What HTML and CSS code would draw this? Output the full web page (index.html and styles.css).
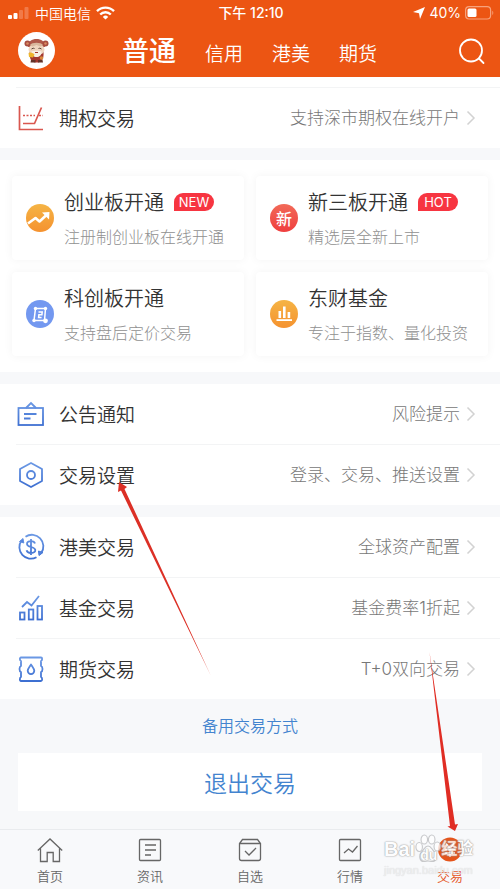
FILE: index.html
```html
<!DOCTYPE html>
<html lang="zh-CN">
<head>
<meta charset="utf-8">
<meta name="viewport" content="width=device-width, initial-scale=1">
<title>交易</title>
<link rel="stylesheet" href="styles.css">
</head>
<body>
<svg class="defs" width="0" height="0" aria-hidden="true">
  <defs>
    <linearGradient id="blue" gradientUnits="userSpaceOnUse" x1="0" y1="0" x2="0" y2="28"><stop offset="0" stop-color="#6f9ce6"/><stop offset="1" stop-color="#3a6cd0"/></linearGradient>
    <linearGradient id="orange" x1="0" y1="0" x2="0" y2="1"><stop offset="0" stop-color="#f5b445"/><stop offset="1" stop-color="#f5922f"/></linearGradient>
    <symbol id="chevron" viewBox="0 0 10 16"><path d="M1.500 1.500L8 8l-6.500 6.500" fill="none" stroke="#d2d2d2" stroke-width="1.500"/></symbol>
  </defs>
</svg>

<header class="header">
  <div class="status">
    <div class="status-side">
      <svg width="22" height="14" viewBox="0 0 22 14"><rect x="0" y="9" width="4" height="4" rx="1" fill="#fff"/><rect x="5.500" y="7" width="4" height="6" rx="1" fill="#fff"/><rect x="11" y="4" width="4" height="9" rx="1" fill="#f17a48"/><rect x="16.500" y="1" width="4" height="12" rx="1" fill="#f17a48"/></svg>
      <span class="carrier">中国电信</span>
      <svg width="19" height="14" viewBox="0 0 19 14" fill="none" stroke="#fff" stroke-width="2.400"><path d="M1 5.200a12 12 0 0 1 17 0"/><path d="M4.200 8.500a7.500 7.500 0 0 1 10.600 0"/><path d="M6.800 10.900a3.800 3.800 0 0 1 5.400 0L9.500 13.600z" fill="#fff" stroke="none"/></svg>
    </div>
    <span class="clock">下午 12:10</span>
    <div class="status-side status-right">
      <svg width="12" height="12" viewBox="0 0 12 12"><path d="M12 0L7 12 6 6.200 0 5z" fill="#fff"/></svg>
      <span class="charge">40%</span>
      <svg width="29" height="14" viewBox="0 0 29 14"><rect x=".6" y=".6" width="25" height="12.400" rx="3.500" fill="none" stroke="#f7a27c" stroke-width="1.200"/><rect x="2.500" y="2.500" width="9" height="8.600" rx="1.500" fill="#fff"/><path d="M27.300 4.800c1.300.6 1.300 3.600 0 4.200z" fill="#f7a27c"/></svg>
    </div>
  </div>
  <div class="topbar">
    <button class="avatar" aria-label="我的">
      <svg width="37" height="37" viewBox="0 0 37 37">
        <circle cx="18.500" cy="18.500" r="18.500" fill="#fff"/>
        <path d="M11.500 20c0 8 2 10.500 7 10.500s7.500-2.500 7-10.500z" fill="#a3382f"/>
        <path d="M13 28l-.5 2.500h5V28zM20 28v2.500h5L24.500 28z" fill="#623329"/>
        <path d="M10 15C10 9 14 7 18.500 7S27 9 27 15z" fill="#b0594a"/>
        <circle cx="9.500" cy="11.500" r="3" fill="#a84c3f"/><circle cx="27.500" cy="11.500" r="3" fill="#a84c3f"/>
        <circle cx="9.500" cy="11.500" r="1.300" fill="#d98b62"/><circle cx="27.500" cy="11.500" r="1.300" fill="#d98b62"/>
        <ellipse cx="18.500" cy="17.500" rx="8" ry="6" fill="#efd5bf"/>
        <path d="M12 13c2-3 11-3 13 0l-2.500 1.500-4-1.500-4 1.500z" fill="#d9b79c"/>
        <path d="M13.500 17l2-1 1 1M20.500 17l1-1 2 1" stroke="#5c4439" fill="none"/>
        <path d="M13.500 19.500c2-1 8-1 10 0 0 4-2 5.500-5 5.500s-5-1.500-5-5.500z" fill="#f7f1e7"/>
        <path d="M17 20.500h3" stroke="#a3382f"/>
        <path d="M10.500 21c2-1.500 5 0 6 1.500l-1.500 3-4-.5z" fill="#eeb52d"/><circle cx="23.500" cy="26" r="1.800" fill="#d9893c"/>
      </svg>
    </button>
    <nav class="tabs">
      <button class="tab tab-on">普通</button>
      <button class="tab">信用</button>
      <button class="tab">港美</button>
      <button class="tab">期货</button>
    </nav>
    <button class="search" aria-label="搜索">
      <svg width="26" height="27" viewBox="0 0 26 27" fill="none" stroke="#fff" stroke-width="1.800" stroke-linecap="round"><circle cx="12" cy="12.500" r="11"/><path d="M20 20.500l4.500 4.500"/></svg>
    </button>
  </div>
</header>

<main class="main">
  <section class="group group-top">
    <a class="row ruled" href="#">
      <svg class="row-icon" viewBox="0 0 28 28" fill="none" stroke="#d9574f" stroke-width="1.700"><path d="M2.500 2v23.500H26"/><path d="M6 19.500h11.500L24.500 3.500"/><path d="M6 11.500h12M22 11.500h4" stroke-dasharray="2 1.500"/></svg>
      <span class="row-title">期权交易</span><span class="row-note">支持深市期权在线开户</span>
      <svg class="chevron"><use href="#chevron"/></svg>
    </a>
  </section>

  <section class="cards">
    <a class="card" href="#">
      <svg class="card-icon" viewBox="0 0 28 28"><circle cx="14" cy="14" r="14" fill="url(#orange)"/><path d="M2 19.500L9.500 14l4 3.500 7-6.500" fill="none" stroke="#fff" stroke-width="2.600" stroke-linejoin="round"/><path d="M16 8.500l7.500-.5-.5 7.500z" fill="#fff"/></svg>
      <div class="card-text"><div class="card-head"><span class="card-title">创业板开通</span><span class="badge">NEW</span></div><div class="card-note">注册制创业板在线开通</div></div>
    </a>
    <a class="card" href="#">
      <span class="card-icon seal">新</span>
      <div class="card-text"><div class="card-head"><span class="card-title">新三板开通</span><span class="badge">HOT</span></div><div class="card-note">精选层全新上市</div></div>
    </a>
    <a class="card" href="#">
      <svg class="card-icon" viewBox="0 0 28 28"><circle cx="14" cy="14" r="14" fill="#7398f0"/><g fill="none" stroke="#fff" stroke-width="1.500"><path d="M9.500 8.500h10L18.500 20.500H8z"/><path d="M12.500 12h3.700l-.3 2.800h-3l-.3 2.800h3"/></g><g fill="#fff"><circle cx="9.500" cy="8.500" r="1.700"/><circle cx="19.500" cy="8.500" r="1.700"/><circle cx="8" cy="20.500" r="1.700"/><circle cx="19.500" cy="20.800" r="2.400"/></g></svg>
      <div class="card-text"><div class="card-head"><span class="card-title">科创板开通</span></div><div class="card-note">支持盘后定价交易</div></div>
    </a>
    <a class="card" href="#">
      <svg class="card-icon" viewBox="0 0 28 28"><circle cx="14" cy="14" r="14" fill="url(#orange)"/><g fill="#fff"><rect x="8.500" y="11" width="2.600" height="7"/><rect x="13" y="6.500" width="2.600" height="11.500"/><rect x="17.600" y="12" width="2.600" height="6"/><rect x="6.500" y="19.200" width="15.500" height="1.800"/></g></svg>
      <div class="card-text"><div class="card-head"><span class="card-title">东财基金</span></div><div class="card-note">专注于指数、量化投资</div></div>
    </a>
  </section>

  <section class="group">
    <a class="row" href="#">
      <svg class="row-icon" viewBox="0 0 28 28" fill="none" stroke="url(#blue)" stroke-width="1.800"><rect x="1.500" y="8" width="24.500" height="17"/><path d="M9 8l5-5 5 5"/><path d="M7 14h12.500M7 18.500h6.500"/></svg>
      <span class="row-title">公告通知</span><span class="row-note">风险提示</span>
      <svg class="chevron"><use href="#chevron"/></svg>
    </a>
    <a class="row ruled" href="#">
      <svg class="row-icon" viewBox="0 0 28 28" fill="none" stroke="url(#blue)" stroke-width="1.800" stroke-linejoin="round"><path d="M14 2l11 6v12l-11 6-11-6V8z"/><circle cx="14" cy="14" r="4"/></svg>
      <span class="row-title">交易设置</span><span class="row-note">登录、交易、推送设置</span>
      <svg class="chevron"><use href="#chevron"/></svg>
    </a>
  </section>

  <section class="group">
    <a class="row" href="#">
      <svg class="row-icon" viewBox="0 0 28 28" fill="none" stroke="url(#blue)" stroke-width="1.800"><path d="M4.500 7.500A11.500 11.500 0 0 0 19.500 24.200M8.500 3.700A11.500 11.500 0 0 1 24.200 20"/><path d="M2.500 8.500l3.500-3 .8 4.500zM26 19.500l-4 3-.5-4.500z" fill="#5583dd" stroke-width="1"/><path d="M18 10.500C17.500 8.800 16 8.200 14 8.200c-2.400 0-4 1-4 2.700 0 4 8.300 2.200 8.300 6.200 0 1.800-1.800 2.900-4.300 2.900-2.300 0-4-.9-4.400-2.700M14 6v16"/></svg>
      <span class="row-title">港美交易</span><span class="row-note">全球资产配置</span>
      <svg class="chevron"><use href="#chevron"/></svg>
    </a>
    <a class="row ruled" href="#">
      <svg class="row-icon" viewBox="0 0 28 28" fill="none" stroke="url(#blue)" stroke-width="1.800"><rect x="3" y="18.500" width="4.500" height="7"/><rect x="11.800" y="15.500" width="4.500" height="10"/><rect x="20.500" y="12" width="4.500" height="13.500"/><path d="M5 13l5-5 4.500 3.500L22 2"/></svg>
      <span class="row-title">基金交易</span><span class="row-note">基金费率1折起</span>
      <svg class="chevron"><use href="#chevron"/></svg>
    </a>
    <a class="row ruled" href="#">
      <svg class="row-icon" viewBox="0 0 28 28" fill="none" stroke="url(#blue)" stroke-width="1.800" stroke-linejoin="round"><path d="M4 2.500h20c1.500 0 1.500 3 0 3.500v5c2 .7 2 5.300 0 6v5c1.500.5 1.500 4 0 4H4c-1.500 0-1.500-3.500 0-4v-5c-2-.7-2-5.300 0-6V6c-1.500-.5-1.500-3.500 0-3.500z"/><path d="M14 9.500c-2 3-3.300 4.500-3.300 6.300a3.300 3.300 0 0 0 6.600 0c0-1.800-1.300-3.300-3.300-6.300z"/></svg>
      <span class="row-title">期货交易</span><span class="row-note">T+0双向交易</span>
      <svg class="chevron"><use href="#chevron"/></svg>
    </a>
  </section>

  <a class="alternate" href="#">备用交易方式</a>
  <button class="logout">退出交易</button>
</main>

<nav class="tabbar">
  <a class="nav" href="#"><svg class="nav-icon" viewBox="0 0 26 26"><path d="M.8 13.500L13 2l12.200 11.500M3.500 11.500v13h6.700v-9h6v9h6.300v-13"/></svg><span>首页</span></a>
  <a class="nav" href="#"><svg class="nav-icon" viewBox="0 0 26 26"><rect x="2.500" y="2.500" width="21" height="21" rx="1"/><path d="M8 8h11M8 13h11M8 18h6"/></svg><span>资讯</span></a>
  <a class="nav" href="#"><svg class="nav-icon" viewBox="0 0 26 26"><path d="M2.500 6.500v15a2 2 0 0 0 2 2h17a2 2 0 0 0 2-2v-15l-3-4h-15zM2.500 6.500h21M8 14l4 4 7-7"/></svg><span>自选</span></a>
  <a class="nav" href="#"><svg class="nav-icon" viewBox="0 0 26 26"><rect x="2.500" y="2.500" width="21" height="21" rx="1"/><path d="M7 16l4.500-4 4 3L20.500 9"/></svg><span>行情</span></a>
  <a class="nav nav-on" href="#"><svg class="nav-icon" viewBox="0 0 26 26"><circle cx="13" cy="12.500" r="12" fill="#e5541b" stroke="none"/><path d="M9 6.500l4 5 4-5M8 12h10M8 16h10M13 12v8" stroke="#fff"/></svg><span>交易</span></a>
  <div class="watermark">
    <div class="mark-name"><span>Bai</span><span class="mark-paw"><svg width="26" height="29" viewBox="0 0 28 29" preserveAspectRatio="none" fill="#fff" stroke="#bcbdc0" stroke-width="1.200"><ellipse cx="4.500" cy="13" rx="3.500" ry="4.500"/><ellipse cx="10" cy="5.500" rx="3.500" ry="4.500"/><ellipse cx="18" cy="5.500" rx="3.500" ry="4.500"/><ellipse cx="24" cy="12.500" rx="3.500" ry="4.500"/><path d="M14 12c3 0 4 3 6.500 5.500 4 4 2.500 10-2 10-2 0-3-.5-4.500-.5s-2.500.5-4.500.5c-4.500 0-6-6-2-10C10 15 11 12 14 12z"/></svg><span class="mark-du">du</span></span><span class="mark-cn">经验</span></div>
    <div class="mark-site">jingyan.baidu.com</div>
  </div>
</nav>

<svg class="arrow arrow-settings" width="96" height="196" viewBox="0 0 96 196"><path d="M2 1L1 11l3-1.500L93.500 194 7.500 8 10 6z" fill="#dc3026"/></svg>
<svg class="arrow arrow-trade" width="32" height="180" viewBox="0 0 32 180"><path d="M1.500 0l20.500 174-2.500.5 7.500 4.500 3-7-3 .5z" fill="#e02d24"/></svg>
</body>
</html>
```
FILE: styles.css
```css
* { box-sizing: border-box; }
body {
  margin: 0;
  min-height: 100vh;
  position: relative;
  display: flex;
  flex-direction: column;
  background: #f7f8fa;
  color: #333;
  font-family: "Noto Sans CJK SC", sans-serif;
  font-weight: 350;
}
a { color: inherit; text-decoration: none; }
button { border: 0; padding: 0; background: none; color: inherit; font: inherit; }
svg { display: block; flex: none; }
.defs { position: absolute; }

.header { background: #ec5513; color: #fff; height: 77px; }
.status { display: flex; align-items: center; height: 25px; padding: 0 6px 0 8px; font-size: 14px; line-height: 24px; }
.status-side { display: flex; flex: 1; align-items: center; gap: 5px; }
.status-right { justify-content: flex-end; gap: 4px; }
.clock { font-family: Inter, "Noto Sans CJK SC", sans-serif; font-weight: 500; }
.charge { font-family: Inter, sans-serif; font-weight: 400; }
.topbar { display: flex; align-items: center; height: 52px; padding: 0 15px 0 18px; }
.avatar { margin-bottom: 2px; }
.tabs { display: flex; flex: 1; align-items: baseline; justify-content: center; gap: 29px; padding-right: 15px; }
.tab { font-size: 19px; line-height: 40px; }
.tab-on { font-size: 27px; font-weight: 500; }

.main { flex: 1; display: flex; flex-direction: column; }
.group { background: #fff; margin-bottom: 12px; }
.group-top { padding-top: 10px; }
.row { position: relative; display: flex; align-items: center; height: 60px; padding: 0 24px 0 17px; }
.ruled { height: 61px; border-top: 1px solid transparent; }
.ruled::before { content: ""; position: absolute; top: -1px; left: 16px; right: 0; height: 1px; background: #f3f4f5; }
.row-icon { width: 28px; height: 28px; margin-right: 14px; }
.row-title { font-size: 19px; line-height: 28px; }
.row-note { flex: 1; text-align: right; font-family: Inter, "Noto Sans CJK SC", sans-serif; font-size: 17px; line-height: 28px; color: #777; font-weight: 300; }
.chevron { width: 10px; height: 16px; margin-left: 6px; }

.cards { display: grid; grid-template-columns: 1fr 1fr; gap: 12px; padding: 16px 12px; margin-bottom: 12px; background: #fff; }
.card { display: flex; align-items: center; height: 84px; padding-left: 14px; background: #fff; border-radius: 4px; box-shadow: 0 0 10px rgba(0, 0, 0, .05); }
.card-icon { width: 28px; height: 28px; margin-right: 10px; }
.seal { border-radius: 50%; background: linear-gradient(#f26a58, #ef3e3e); color: #fff; font-size: 16px; line-height: 28px; font-weight: 500; text-align: center; }
.card-head { display: flex; align-items: center; height: 36px; }
.card-title { font-size: 20px; line-height: 36px; }
.badge { width: 40px; margin-left: 10px; border-radius: 9px 9px 9px 0; background: #f73541; color: #fff; font-family: Inter, sans-serif; font-size: 13px; line-height: 18px; font-weight: 400; text-align: center; }
.card-note { font-size: 16px; line-height: 32px; color: #909090; font-weight: 300; }

.alternate { align-self: center; color: #4384cf; font-size: 16px; line-height: 28px; }
.logout { height: 58px; margin: 14px 18px 18px; background: #fff; color: #4384cf; font-size: 23px; }

.tabbar { position: relative; display: flex; height: 60px; border-top: 1px solid #e9ebee; background: #f8f9fb; }
.nav { flex: 1; display: flex; flex-direction: column; align-items: center; padding-top: 7px; color: #666; font-size: 13px; line-height: 26px; }
.nav-icon { width: 26px; height: 26px; fill: none; stroke: #666; stroke-width: 1.3; }
.nav-on { color: #e5541b; }

.watermark { position: absolute; right: 24px; top: 4px; width: 92px; opacity: .8; color: #fff; font-family: "Liberation Sans", "Noto Sans CJK SC", sans-serif; font-weight: 700; text-shadow: 0 0 1px #999, 0 0 1px #999, 0 0 2px #aaa; white-space: nowrap; pointer-events: none; }
.mark-name { display: flex; align-items: flex-end; font-size: 20px; line-height: 28px; }
.mark-paw { position: relative; }
.mark-du { position: absolute; left: 5px; top: 7px; font-size: 14px; }
.mark-cn { font-size: 16px; }
.mark-site { font-size: 11px; line-height: 14px; font-weight: 400; color: #ececee; text-shadow: 0 0 1px #ccc; }

.arrow { position: absolute; pointer-events: none; }
.arrow-settings { left: 117px; top: 481px; }
.arrow-trade { left: 428px; top: 652px; }
```
